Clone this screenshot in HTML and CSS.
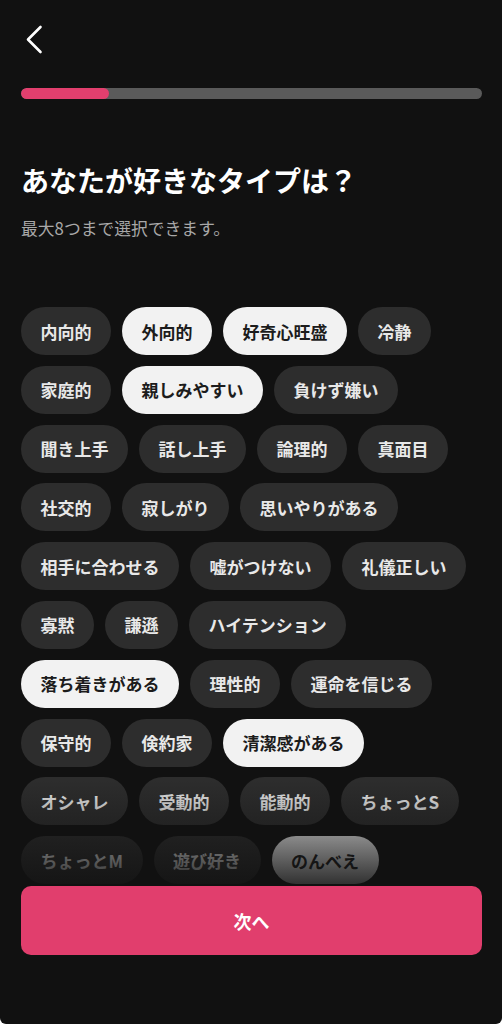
FILE: index.html
```html
<!DOCTYPE html>
<html lang="ja">
<head>
<meta charset="utf-8">
<title>好きなタイプ</title>
<link rel="stylesheet" href="styles.css">
</head>
<body>
<div class="screen">
  <header class="topbar">
    <svg class="back" width="20" height="30" viewBox="0 0 20 30" aria-label="戻る">
      <polyline points="15.5,2 3,14.5 15.5,27" fill="none" stroke="#ffffff" stroke-width="2.6" stroke-linecap="round" stroke-linejoin="round"/>
    </svg>
  </header>
  <div class="progress"><div class="progress-fill"></div></div>
  <h1 class="title">あなたが好きなタイプは？</h1>
  <p class="subtitle">最大8つまで選択できます。</p>
  <div class="chips-wrap">
    <div class="chips">
      <span class="chip">内向的</span>
      <span class="chip on">外向的</span>
      <span class="chip on">好奇心旺盛</span>
      <span class="chip">冷静</span>
      <span class="chip">家庭的</span>
      <span class="chip on">親しみやすい</span>
      <span class="chip">負けず嫌い</span>
      <span class="chip">聞き上手</span>
      <span class="chip">話し上手</span>
      <span class="chip">論理的</span>
      <span class="chip">真面目</span>
      <span class="chip">社交的</span>
      <span class="chip">寂しがり</span>
      <span class="chip">思いやりがある</span>
      <span class="chip">相手に合わせる</span>
      <span class="chip">嘘がつけない</span>
      <span class="chip">礼儀正しい</span>
      <span class="chip">寡黙</span>
      <span class="chip">謙遜</span>
      <span class="chip">ハイテンション</span>
      <span class="chip on">落ち着きがある</span>
      <span class="chip">理性的</span>
      <span class="chip">運命を信じる</span>
      <span class="chip">保守的</span>
      <span class="chip">倹約家</span>
      <span class="chip on">清潔感がある</span>
      <span class="chip">オシャレ</span>
      <span class="chip">受動的</span>
      <span class="chip">能動的</span>
      <span class="chip">ちょっとS</span>
      <span class="chip">ちょっとM</span>
      <span class="chip">遊び好き</span>
      <span class="chip on">のんべえ</span>
    </div>
    <div class="fade"></div>
  </div>
  <div class="footer">
    <button class="next">次へ</button>
  </div>
</div>
</body>
</html>
```

FILE: styles.css
```css
html, body {
  margin: 0;
  padding: 0;
  background: #ffffff;
}
body {
  font-family: "Noto Sans CJK JP", "Noto Sans", sans-serif;
}
.screen {
  width: 502px;
  height: 1024px;
  background: #111111;
  border-radius: 0 0 6px 6px;
  display: flex;
  flex-direction: column;
  padding: 0 20px 0 21px;
  box-sizing: border-box;
  overflow: hidden;
}
.topbar {
  height: 88px;
  display: flex;
  align-items: flex-start;
}
.back {
  display: block;
  margin-top: 25px;
  margin-left: 4px;
}
.progress {
  height: 11px;
  border-radius: 6px;
  background: #5a5a5a;
  overflow: hidden;
  flex: none;
}
.progress-fill {
  width: 88px;
  height: 100%;
  border-radius: 6px;
  background: #e23f6e;
}
.title {
  margin: 61px 0 0 0;
  font-size: 28px;
  line-height: 40px;
  font-weight: 700;
  color: #ffffff;
  letter-spacing: 0;
}
.subtitle {
  margin: 15px 0 0 0;
  font-size: 16.8px;
  line-height: 26px;
  color: #a8a8a8;
  font-weight: 400;
}
.chips-wrap {
  position: relative;
  flex: 1;
  margin-top: 66px;
  margin-right: 2px;
  overflow: hidden;
}
.chips {
  display: flex;
  flex-wrap: wrap;
  column-gap: 11px;
  row-gap: 10.8px;
}
.chip {
  height: 48px;
  padding: 0 19.5px;
  border-radius: 24px;
  background: #2d2d2d;
  color: #e8e8e8;
  font-size: 17px;
  font-weight: 700;
  display: flex;
  align-items: center;
  box-sizing: border-box;
  white-space: nowrap;
}
.chip.on {
  background: #f2f2f2;
  color: #1c1c1c;
}
.fade {
  position: absolute;
  left: -21px;
  right: -22px;
  bottom: 0;
  height: 106px;
  background: linear-gradient(to bottom, rgba(17,17,17,0), rgba(17,17,17,0.87));
  pointer-events: none;
}
.footer {
  flex: none;
  padding-bottom: 69px;
}
.next {
  display: block;
  width: 100%;
  height: 69px;
  border: none;
  border-radius: 10px;
  background: #e13e6d;
  color: #ffffff;
  font-family: "Noto Sans CJK JP", "Noto Sans", sans-serif;
  font-size: 18px;
  font-weight: 700;
}
```
